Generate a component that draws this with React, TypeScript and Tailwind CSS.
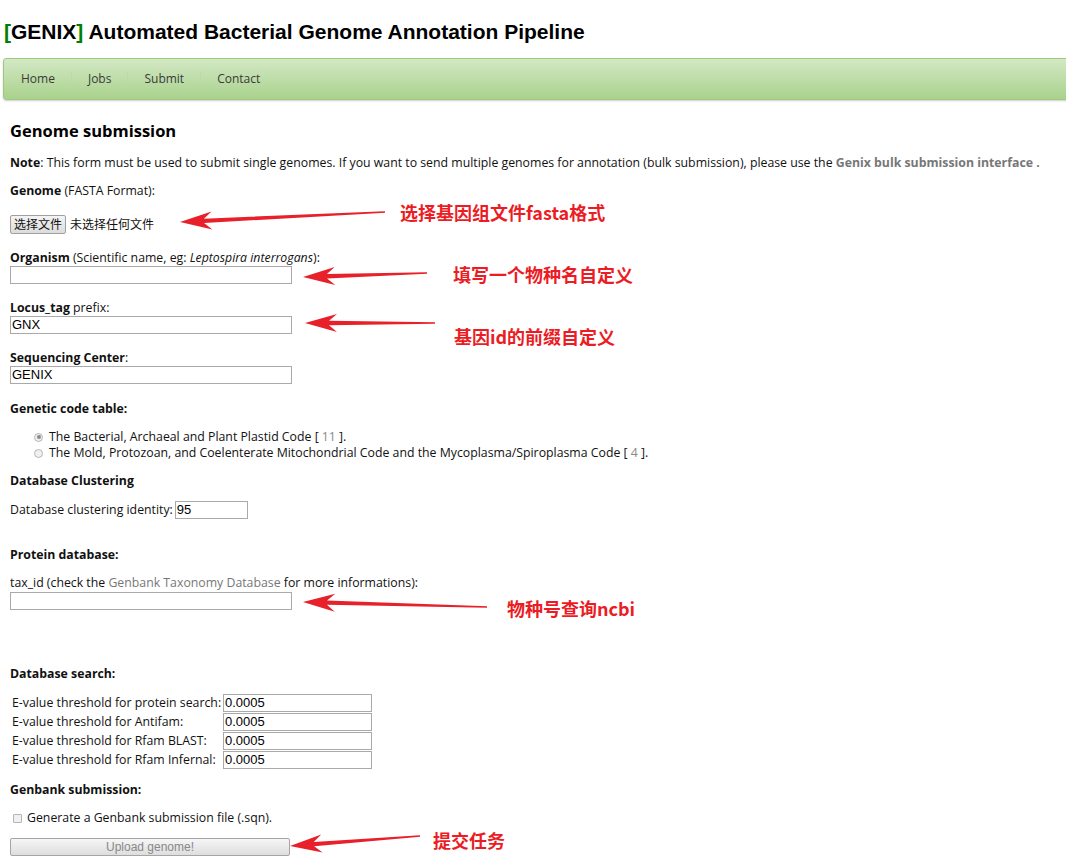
import React from 'react';

const arrows = [
  { x1: 385, y1: 212, x2: 180, y2: 222 },
  { x1: 427, y1: 273, x2: 303, y2: 277 },
  { x1: 435, y1: 323, x2: 305, y2: 323 },
  { x1: 487, y1: 607, x2: 303, y2: 602 },
  { x1: 420, y1: 836, x2: 290, y2: 846 },
];

const notes = [
  { text: '选择基因组文件fasta格式', x: 400, y: 200 },
  { text: '填写一个物种名自定义', x: 453, y: 262 },
  { text: '基因id的前缀自定义', x: 454, y: 324 },
  { text: '物种号查询ncbi', x: 507, y: 596 },
  { text: '提交任务', x: 433, y: 828 },
];

// tapered arrow polygon: thin tail, thick near head, barbed head
function arrowPoints(a: { x1: number; y1: number; x2: number; y2: number }) {
  const dx = a.x2 - a.x1;
  const dy = a.y2 - a.y1;
  const len = Math.sqrt(dx * dx + dy * dy);
  const ux = dx / len;
  const uy = dy / len;
  const nx = -uy;
  const ny = ux;
  const head = 32;
  const notch = 24;
  const hw = 9;
  const p = (t: number, w: number) => `${a.x1 + ux * t + nx * w},${a.y1 + uy * t + ny * w}`;
  return [
    p(0, 0.8),
    p(len - notch, 2.2),
    p(len - head, hw),
    p(len, 0),
    p(len - head, -hw),
    p(len - notch, -2.2),
    p(0, -0.8),
  ].join(' ');
}

const Label: React.FC<{ children: React.ReactNode; className?: string }> = ({ children, className }) => (
  <div className={`h-4 leading-4 whitespace-nowrap ${className ?? ''}`}>{children}</div>
);

const TextBox: React.FC<{ value?: string; w: string }> = ({ value, w }) => (
  <div className={`${w} h-[18px] border border-[#a9a9a9] bg-white px-[1px] text-[13px] leading-[16px] text-black font-['Liberation_Sans',Arial,sans-serif]`}>
    {value}
  </div>
);

const App: React.FC = () => {
  return (
    <div className="relative w-[1066px] h-[868px] overflow-hidden bg-white text-[12.3px] text-[#111] font-['Open_Sans','Noto_Sans_CJK_SC',sans-serif]">
      <h1 className="pt-[20px] pl-[4px] h-[44px] leading-[24px] text-[21px] font-bold font-['Liberation_Sans',Arial,sans-serif] text-black">
        <span className="text-[#008000]">[</span>GENIX<span className="text-[#008000]">]</span> Automated Bacterial Genome Annotation Pipeline
      </h1>

      <nav className="mt-[14px] ml-[3px] mr-[-6px] h-[42px] rounded-[3px] border border-[#9ccb80] bg-gradient-to-b from-[#d3e8c4] to-[#a9d28c] shadow-[0_1px_2px_rgba(0,0,0,0.2)] flex items-center pl-[17px] text-[12px] text-[#3a3a3a]">
        <span>Home</span>
        <span className="mx-[16px] w-px h-[14px] bg-[#bcd9aa]" />
        <span>Jobs</span>
        <span className="mx-[16px] w-px h-[14px] bg-[#bcd9aa]" />
        <span>Submit</span>
        <span className="mx-[16px] w-px h-[14px] bg-[#bcd9aa]" />
        <span>Contact</span>
      </nav>

      <div className="pl-[10px]">
        <h2 className="mt-[20px] h-[22px] leading-[22px] text-[16.5px] font-bold text-black">Genome submission</h2>

        <Label className="mt-[13px]">
          <b>Note</b>: This form must be used to submit single genomes. If you want to send multiple genomes for annotation (bulk submission), please use the{' '}
          <b className="text-[#777]">Genix bulk submission interface</b> <b className="text-[#777]">.</b>
        </Label>

        <Label className="mt-[12px]">
          <b>Genome</b> (FASTA Format):
        </Label>

        <div className="mt-[16px] h-[19px] flex items-center">
          <div className="h-[19px] px-[3px] border border-[#a0a0a0] rounded-[2px] bg-gradient-to-b from-[#f4f4f4] to-[#dcdcdc] text-[12px] leading-[17px]">选择文件</div>
          <span className="ml-[4px] text-[12px]">未选择任何文件</span>
        </div>

        <Label className="mt-[16px]">
          <b>Organism</b> (Scientific name, eg: <i>Leptospira interrogans</i>):
        </Label>
        <TextBox w="w-[282px]" />

        <Label className="mt-[16px]">
          <b>Locus_tag</b> prefix:
        </Label>
        <TextBox w="w-[282px]" value="GNX" />

        <Label className="mt-[16px]">
          <b>Sequencing Center</b>:
        </Label>
        <TextBox w="w-[282px]" value="GENIX" />

        <Label className="mt-[17px] font-bold">Genetic code table:</Label>

        <div className="mt-[12px] pl-[24px]">
          <div className="h-4 flex items-center">
            <span className="w-[9px] h-[9px] rounded-full border border-[#b5b5b5] bg-[#f0f0f0] flex items-center justify-center mr-[6px]">
              <span className="w-[4px] h-[4px] rounded-full bg-[#8a8a8a]" />
            </span>
            <span>The Bacterial, Archaeal and Plant Plastid Code [ <span className="text-[#888]">11</span> ].</span>
          </div>
          <div className="h-4 flex items-center">
            <span className="w-[9px] h-[9px] rounded-full border border-[#b5b5b5] bg-[#f0f0f0] mr-[6px]" />
            <span>The Mold, Protozoan, and Coelenterate Mitochondrial Code and the Mycoplasma/Spiroplasma Code [ <span className="text-[#888]">4</span> ].</span>
          </div>
        </div>

        <Label className="mt-[12px] font-bold">Database Clustering</Label>

        <div className="mt-[12px] h-[18px] flex items-center">
          <span className="mr-[2px]">Database clustering identity:</span>
          <TextBox w="w-[73px]" value="95" />
        </div>

        <Label className="mt-[28px] font-bold">Protein database:</Label>

        <Label className="mt-[12px]">
          tax_id (check the <span className="text-[#777]">Genbank Taxonomy Database</span> for more informations):
        </Label>
        <div className="mt-[1px]">
          <TextBox w="w-[282px]" />
        </div>

        <Label className="mt-[56px] font-bold">Database search:</Label>

        <div className="mt-[12px] pl-[2px] grid grid-cols-[211px_149px] gap-y-[1px]">
          {['protein search:', 'Antifam:', 'Rfam BLAST:', 'Rfam Infernal:'].map((t) => (
            <React.Fragment key={t}>
              <span className="h-[18px] leading-[18px] whitespace-nowrap">E-value threshold for {t}</span>
              <TextBox w="w-[149px]" value="0.0005" />
            </React.Fragment>
          ))}
        </div>

        <Label className="mt-[13px] font-bold">Genbank submission:</Label>

        <div className="mt-[12px] h-4 flex items-center pl-[3px]">
          <span className="w-[9px] h-[9px] rounded-[1px] border border-[#b5b5b5] bg-[#f0f0f0] mr-[5px]" />
          <span>Generate a Genbank submission file (.sqn).</span>
        </div>

        <div className="mt-[12px] w-[280px] h-[18px] border border-[#a5a5a5] rounded-[2px] bg-gradient-to-b from-[#f6f6f6] to-[#dedede] text-center text-[12px] leading-[16px] text-[#888] font-['Liberation_Sans',Arial,sans-serif]">
          Upload genome!
        </div>
      </div>

      {/* annotation overlay */}
      <svg className="absolute left-0 top-0 pointer-events-none" width={1066} height={868}>
        {arrows.map((a, i) => (
          <polygon key={i} points={arrowPoints(a)} fill="#e8202a" />
        ))}
      </svg>
      {notes.map((n) => (
        <div
          key={n.text}
          className="absolute text-[18px] leading-[24px] font-bold text-[#ec1c24] font-['Noto_Sans_CJK_SC','Open_Sans',sans-serif]"
          style={{ left: n.x, top: n.y }}
        >
          {n.text}
        </div>
      ))}
    </div>
  );
};

export default App;
